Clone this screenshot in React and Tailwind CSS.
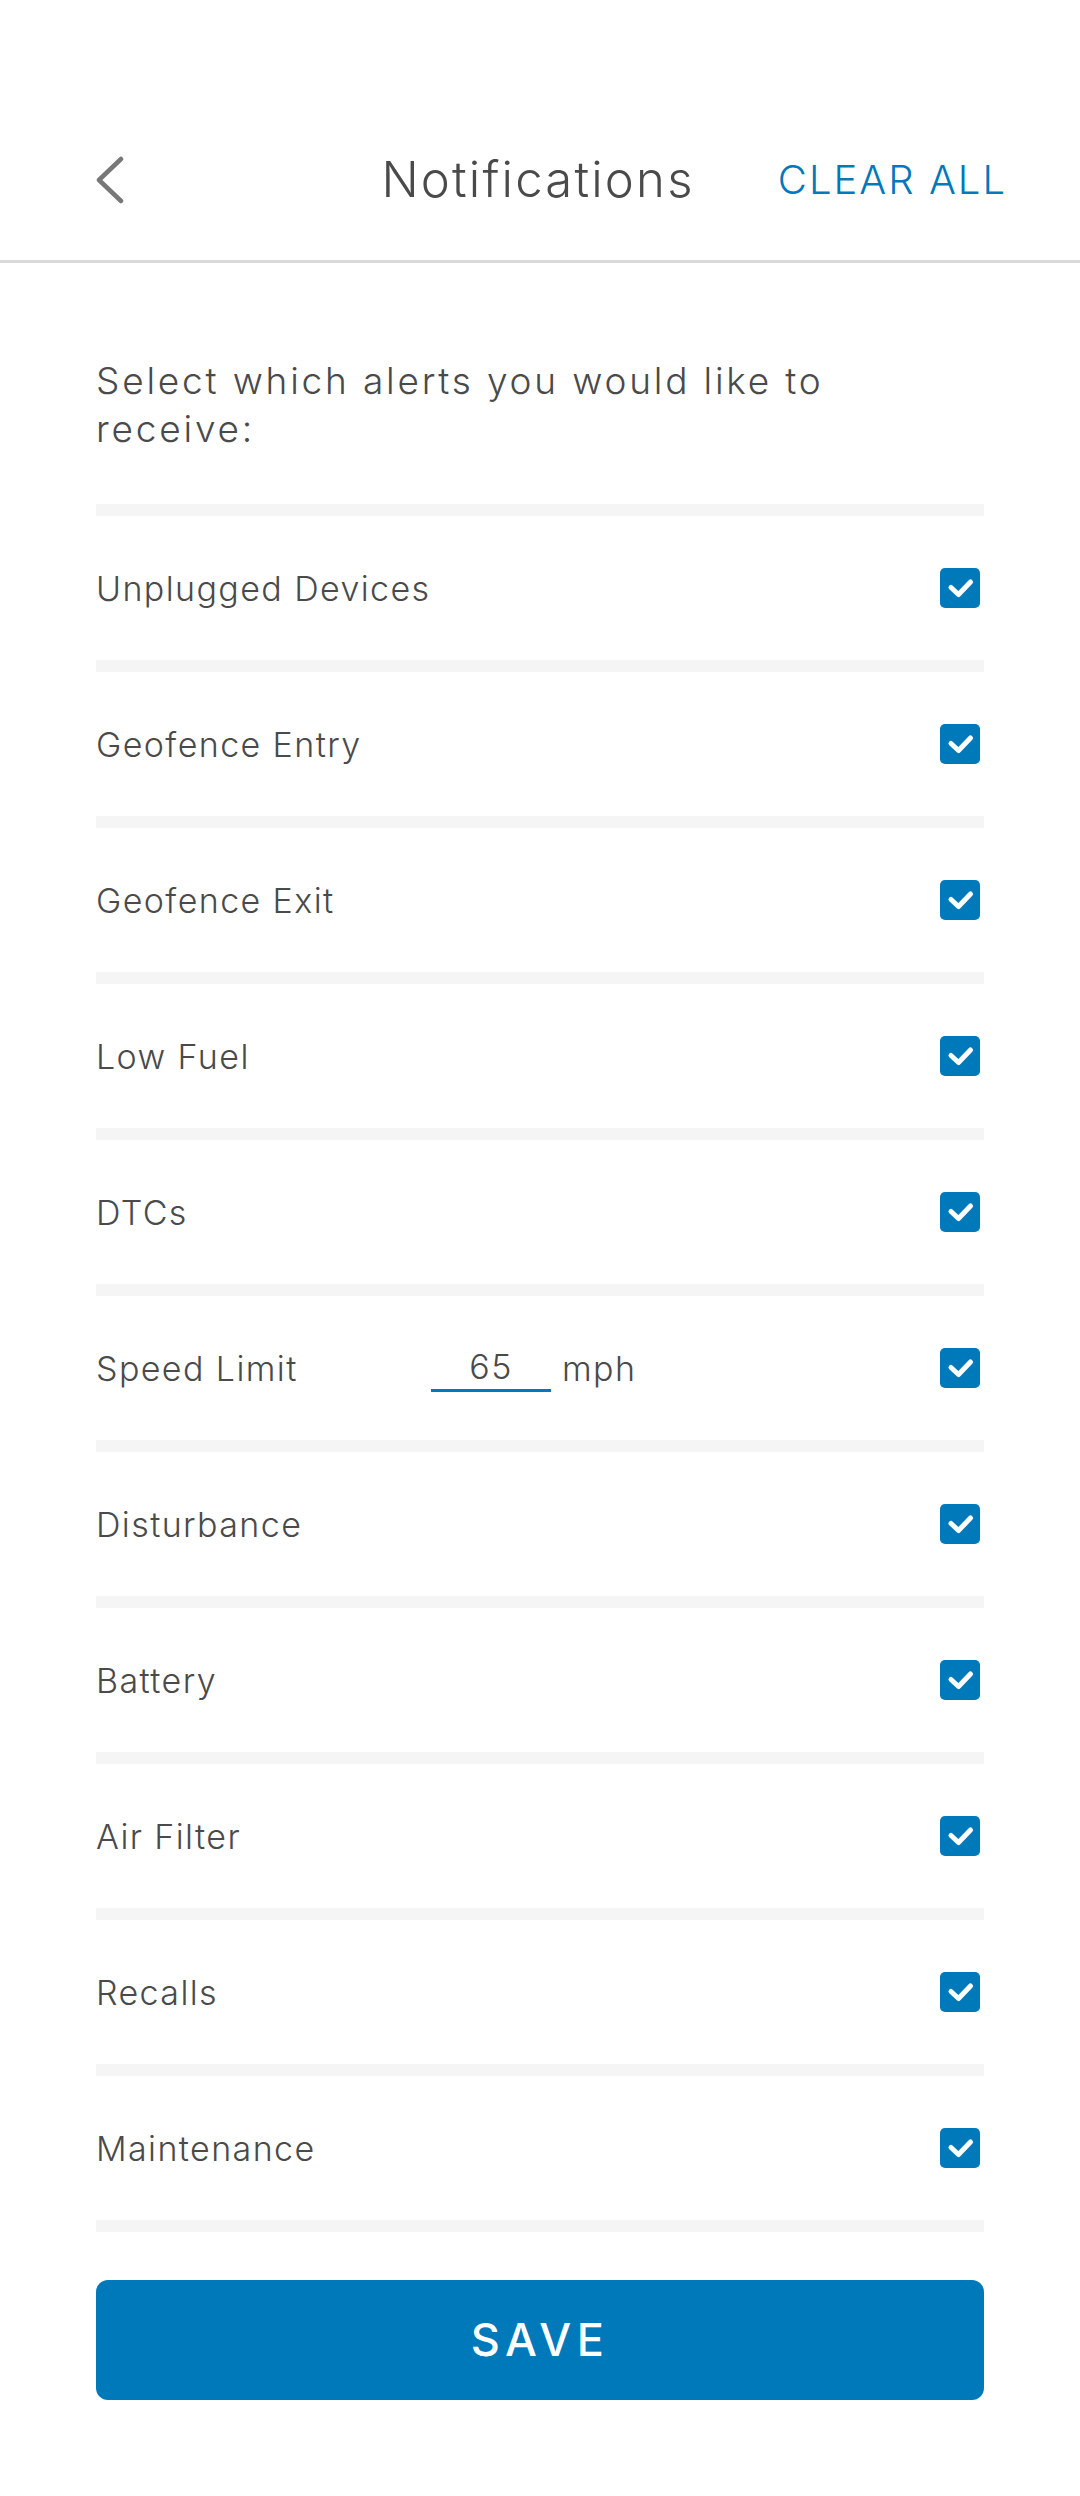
import React from "react";

const ALERTAS = [
  "Unplugged Devices",
  "Geofence Entry",
  "Geofence Exit",
  "Low Fuel",
  "DTCs",
  "Speed Limit",
  "Disturbance",
  "Battery",
  "Air Filter",
  "Recalls",
  "Maintenance",
];

const Casilla = () => (
  <div className="w-[40px] h-[40px] rounded-[5px] bg-[#0079ba] flex items-center justify-center">
    <svg viewBox="0 0 40 40" className="w-[40px] h-[40px]">
      <path
        d="M11 19.5 L18.5 26.5 L30.5 14"
        fill="none"
        stroke="#ffffff"
        strokeWidth="5"
        strokeLinecap="round"
        strokeLinejoin="round"
      />
    </svg>
  </div>
);

const Fila = ({ nombre }) => (
  <>
    <div className="h-[12px] bg-[#f5f5f5]"></div>
    <div className="h-[144px] flex items-center justify-between pr-[4px]">
      <div className="flex items-center text-[34px] text-[#4a4a4a] font-light tracking-[1.4px]">
        <span className="w-[335px]">{nombre}</span>
        {nombre === "Speed Limit" && (
          <>
            <span className="w-[120px] border-b-[3px] border-[#0079ba] text-center leading-[44px]">
              65
            </span>
            <span className="ml-[11px]">mph</span>
          </>
        )}
      </div>
      <Casilla />
    </div>
  </>
);

export default function App() {
  return (
    <div className="w-[1080px] min-h-[2496px] bg-white font-['Inter',sans-serif]">
      {/* Cabecera */}
      <div className="pt-[100px] h-[260px]">
        <div className="h-[160px] grid grid-cols-[1fr_auto_1fr] items-center px-[93px]">
          <svg viewBox="0 0 32 48" className="w-[32px] h-[48px]">
            <path
              d="M28 3 L6 24 L28 45"
              fill="none"
              stroke="#777777"
              strokeWidth="4.5"
              strokeLinecap="round"
              strokeLinejoin="round"
            />
          </svg>
          <h1 className="-ml-[4px] text-[49px] text-[#4a4a4a] font-light tracking-[2.2px]">Notifications</h1>
          <button
            type="button"
            className="justify-self-end -mr-[20px] text-[40px] text-[#0079ba] font-light tracking-[2px] uppercase"
          >
            Clear All
          </button>
        </div>
      </div>
      <div className="h-[3px] bg-[#d9d9d9]"></div>

      <div className="px-[96px]">
        <p className="mt-[94px] text-[37px] leading-[48px] text-[#4a4a4a] font-light tracking-[2.8px] w-[800px]">
          Select which alerts you would like to receive:
        </p>

        <div className="mt-[51px]">
          {ALERTAS.map((nombre) => (
            <Fila key={nombre} nombre={nombre} />
          ))}
          <div className="h-[12px] bg-[#f5f5f5]"></div>
        </div>

        <button
          type="button"
          className="mt-[48px] w-full h-[120px] rounded-[12px] bg-[#0079ba] text-white text-[45px] font-medium tracking-[5.5px] uppercase"
        >
          Save
        </button>
      </div>
    </div>
  );
}
